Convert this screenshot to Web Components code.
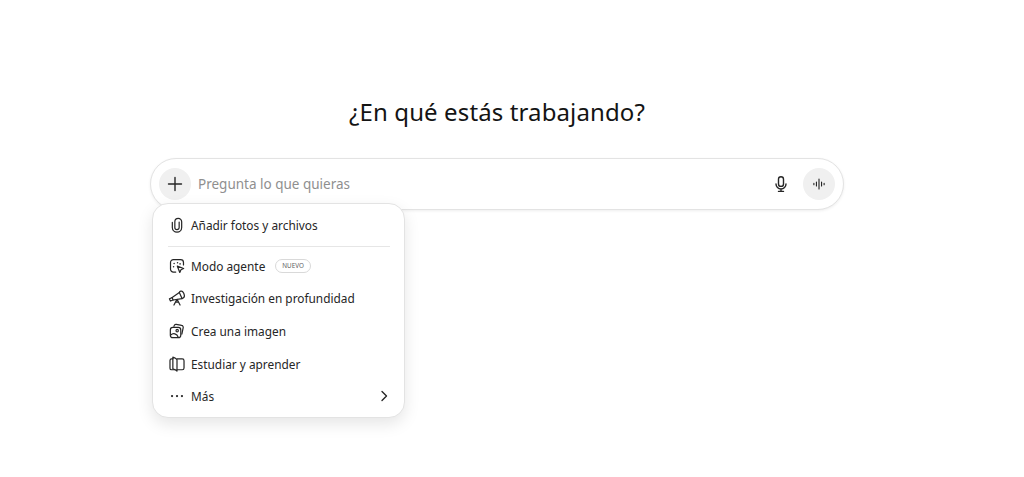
<!DOCTYPE html>
<html lang="es">
<head>
<meta charset="utf-8">
<title>ChatGPT</title>
<style>
    html, body { margin: 0; height: 100%; background: #fff; overflow: hidden; }
    body { font-family: "Noto Sans", "Open Sans", sans-serif; color: #0d0d0d; }
</style>
</head>
<body>
<chat-page>
    <chat-composer placeholder="Pregunta lo que quieras">
        <tools-menu>
            <menu-item label="Añadir fotos y archivos" icon="clip"></menu-item>
            <menu-sep></menu-sep>
            <menu-item label="Modo agente" icon="agent" badge="NUEVO"></menu-item>
            <menu-item label="Investigación en profundidad" icon="scope"></menu-item>
            <menu-item label="Crea una imagen" icon="image"></menu-item>
            <menu-item label="Estudiar y aprender" icon="book"></menu-item>
            <menu-item label="Más" icon="dots" more></menu-item>
        </tools-menu>
    </chat-composer>
</chat-page>

<script>
const ICONS = {
    clip: `<path d="M4.800 7.200v5.600a5.200 5.200 0 0 0 10.400 0V6.400a3.800 3.800 0 0 0-7.600 0v6.400a2.400 2.400 0 0 0 4.800 0V6.800"/>`,
    agent: `<path d="M8.600 16.800H6A3.200 3.200 0 0 1 2.800 13.600V6A3.200 3.200 0 0 1 6 2.800h8A3.200 3.200 0 0 1 17.200 6v2.800"/><path d="M10.400 10.200l7 2.600-3 1.300-1.300 3.100z"/><path d="M6.800 7.200v.1M10.600 6.400v.1M13.400 7.600v.1M6.200 10.800v.1" stroke-width="1.700"/>`,
    scope: `<path d="M1.600 10.800l1.100 2.600 3-1.200-1.100-2.600z"/><path d="M4.600 9.400l8-5.600 3 6.800-9.900 1.600"/><path d="M12.600 3.800c.6-1.500 2.500-2 3.500-1 1.100 1.100 1.900 2.800 2.100 4.300.2 1.700-.9 3.100-2.600 3.500"/><path d="M9.800 11.800l-3.200 6M10.200 11.600l3.200 6.200M8.400 14.600h3.400"/>`,
    image: `<path d="M6.600 4.800l.3-.8A2 2 0 0 1 9.200 2.600l6 1.200a2.100 2.100 0 0 1 1.700 2.500l-1.500 7.200"/><rect x="2.600" y="6" width="11.600" height="11.400" rx="2.800"/><circle cx="10.200" cy="9.600" r="1.300"/><path d="M2.900 14.600c2.900-2.800 7-1.800 8.600 2.600"/>`,
    book: `<path d="M10 5.200C8.600 3.600 7.200 2.800 5.400 2.400v13c1.900.4 3.400 1.100 4.600 2.400z"/><path d="M5.400 4.200H4A1.800 1.800 0 0 0 2.200 6v8.600A1.800 1.800 0 0 0 4 16.400h3.600"/><path d="M10 4.400h5.800a2 2 0 0 1 2 2v8a2 2 0 0 1-2 2H10"/>`,
    dots: `<circle cx="4.500" cy="10" r="1.250" fill="currentColor" stroke="none"/><circle cx="10" cy="10" r="1.250" fill="currentColor" stroke="none"/><circle cx="15.500" cy="10" r="1.250" fill="currentColor" stroke="none"/>`
};

class ChatPage extends HTMLElement {
    constructor() {
        super();
        this.shadowDOM = this.attachShadow({ mode: "open" });
        this.shadowDOM.innerHTML = `
            <style>
                :host {
                    display: flex;
                    flex-direction: column;
                    align-items: center;
                    height: 100%;
                    padding: 94px 30px 0 0;
                    box-sizing: border-box;
                }
                h1 {
                    margin: 0 0 29px;
                    font-size: 24px;
                    line-height: 35px;
                    font-weight: 400;
                    letter-spacing: .12px;
                    color: #141414;
                }
            </style>
            <h1>¿En qué estás trabajando?</h1>
            <slot></slot>`;
    }
}

class ChatComposer extends HTMLElement {
    constructor() {
        super();
        this.shadowDOM = this.attachShadow({ mode: "open" });
        this.shadowDOM.innerHTML = `
            <style>
                :host {
                    display: flex;
                    align-items: center;
                    position: relative;
                    width: 694px;
                    height: 52px;
                    padding: 0 8px;
                    box-sizing: border-box;
                    border: 1px solid #e3e3e3;
                    border-radius: 26px;
                    background: #fff;
                    box-shadow: 0 1px 3px rgba(0, 0, 0, .07);
                }
                .round {
                    width: 32px;
                    height: 32px;
                    border-radius: 50%;
                    background: #f0f0f0;
                    display: flex;
                    align-items: center;
                    justify-content: center;
                    flex: none;
                }
                .text {
                    flex: 1;
                    margin-left: 7px;
                    font-size: 13.500px;
                    color: #8f8f8f;
                }
                .mic { margin-right: 12px; display: flex; }
                svg { display: block; fill: none; stroke: #262626; stroke-linecap: round; stroke-linejoin: round; }
                .menu { position: absolute; left: 1px; top: 44px; }
            </style>
            <div class="round">
                <svg width="20" height="20" viewBox="0 0 20 20" stroke-width="1.400"><path d="M10 3.500v13M3.500 10h13"/></svg>
            </div>
            <div class="text">${this.getAttribute("placeholder")}</div>
            <div class="mic">
                <svg width="20" height="20" viewBox="0 0 20 20" stroke-width="1.400"><rect x="7.500" y="2.800" width="5" height="9.600" rx="2.500"/><path d="M5 10a5 5 0 0 0 10 0M10 15v2.400M7.500 17.400h5"/></svg>
            </div>
            <div class="round">
                <svg width="16" height="16" viewBox="0 0 20 20" stroke-width="1.400"><path d="M3.600 9.200v1.600M6.800 7.600v4.800M10 3.800v12.400M13.200 7.600v4.800M16.400 9.200v1.600"/></svg>
            </div>
            <div class="menu"><slot></slot></div>`;
    }
}

class ToolsMenu extends HTMLElement {
    constructor() {
        super();
        this.shadowDOM = this.attachShadow({ mode: "open" });
        this.shadowDOM.innerHTML = `
            <style>
                :host {
                    display: block;
                    width: 253px;
                    height: 215px;
                    padding: 5px 14px 0 15px;
                    box-sizing: border-box;
                    border: 1px solid #e3e3e3;
                    border-radius: 16px;
                    background: #fff;
                    box-shadow: 0 6px 16px rgba(0, 0, 0, .1);
                }
            </style>
            <slot></slot>`;
    }
}

class MenuSep extends HTMLElement {
    constructor() {
        super();
        this.attachShadow({ mode: "open" }).innerHTML = `
            <style>
                :host { display: block; height: 1px; margin: 4px 0 3px; background: #e6e6e6; }
            </style>`;
    }
}

class MenuItem extends HTMLElement {
    constructor() {
        super();
        this.shadowDOM = this.attachShadow({ mode: "open" });
    }

    connectedCallback() {
        const badge = this.getAttribute("badge");
        const more = this.hasAttribute("more");
        this.shadowDOM.innerHTML = `
            <style>
                :host {
                    display: flex;
                    align-items: center;
                    height: 32.600px;
                    font-size: 11.850px;
                    color: #262626;
                }
                svg { display: block; flex: none; fill: none; stroke: #262626; stroke-width: 1.350; stroke-linecap: round; stroke-linejoin: round; }
                .label { margin-left: 5px; }
                .badge {
                    margin-left: 10px;
                    padding: 0 6px;
                    height: 12px;
                    line-height: 12px;
                    font-size: 6.300px;
                    color: #5d5d5d;
                    border: 1px solid #d9d9d9;
                    border-radius: 7px;
                }
                .chev { margin-left: auto; margin-right: -1px; }
            </style>
            <svg width="18" height="18" viewBox="0 0 20 20">${ICONS[this.getAttribute("icon")]}</svg>
            <span class="label">${this.getAttribute("label")}</span>
            ${badge ? `<span class="badge">${badge}</span>` : ""}
            ${more ? `<svg class="chev" width="14" height="14" viewBox="0 0 14 14"><path d="M5 2.500L9.500 7 5 11.500"/></svg>` : ""}`;
    }
}

customElements.define("chat-page", ChatPage);
customElements.define("chat-composer", ChatComposer);
customElements.define("tools-menu", ToolsMenu);
customElements.define("menu-sep", MenuSep);
customElements.define("menu-item", MenuItem);
</script>
</body>
</html>
